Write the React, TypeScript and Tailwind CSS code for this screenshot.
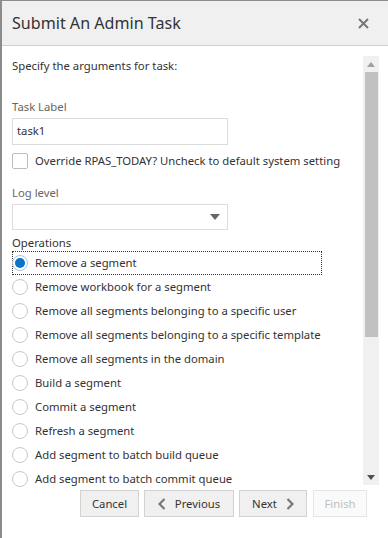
import React from "react";

const ops = [
  "Remove a segment",
  "Remove workbook for a segment",
  "Remove all segments belonging to a specific user",
  "Remove all segments belonging to a specific template",
  "Remove all segments in the domain",
  "Build a segment",
  "Commit a segment",
  "Refresh a segment",
  "Add segment to batch build queue",
  "Add segment to batch commit queue",
  "Remove a segment from batch queue",
];

export default function App() {
  return (
    <div
      className="w-[388px] h-[538px] bg-white border-l-2 border-t border-[#8c8c8c] flex flex-col overflow-hidden text-[#333]"
      style={{ fontFamily: "'Noto Sans', sans-serif" }}
    >
      <div className="h-[45px] shrink-0 bg-[#f0f0f0] border-b border-[#cfcfcf] flex items-center justify-between pl-[10px] pr-[19px]">
        <span className="text-[16.1px] text-[#333]">Submit An Admin Task</span>
        <svg width="11" height="11" viewBox="0 0 11 11">
          <path d="M1 1 L10 10 M10 1 L1 10" stroke="#777" strokeWidth="2" />
        </svg>
      </div>
      <div className="flex pt-[10px] pl-[10px] pr-[10px] h-[442px] shrink-0">
        <div className="flex-1 flex flex-col text-[11.3px] h-[432px] overflow-hidden">
          <div className="shrink-0 h-[20px] leading-[20px]">Specify the arguments for task:</div>
          <div className="shrink-0 mt-[21px] h-[20px] leading-[20px] text-[#666]">Task Label</div>
          <div className="shrink-0 mt-[1px] w-[216px] h-[27px] border border-[#dcdcdc] flex items-center pl-[4px]">task1</div>
          <div className="shrink-0 mt-[8px] flex items-center h-[16px]">
            <div className="w-[16px] h-[16px] border border-[#bdbdbd] rounded-[2px] bg-white" />
            <span className="ml-[7px]">Override RPAS_TODAY? Uncheck to default system setting</span>
          </div>
          <div className="shrink-0 mt-[14px] h-[20px] leading-[20px] text-[#666]">Log level</div>
          <div className="shrink-0 mt-[1px] w-[216px] h-[26px] border border-[#dcdcdc] flex items-center justify-end pr-[7px]">
            <svg width="10" height="6" viewBox="0 0 10 6">
              <path d="M0 0 L10 0 L5 6 Z" fill="#666" />
            </svg>
          </div>
          <div className="shrink-0 mt-[5px] h-[16px] leading-[16px]">Operations</div>
          <div className="shrink-0 flex flex-col">
            {ops.map((o, i) => (
              <div
                key={o}
                className={
                  "shrink-0 flex items-center h-[24px] " +
                  (i === 0 ? "w-[310px] border border-dotted border-[#333]" : "border border-transparent")
                }
              >
                {i === 0 ? (
                  <div className="w-[16px] h-[16px] rounded-full border border-[#9cc8ef] bg-white flex items-center justify-center -ml-px">
                    <div className="w-[10px] h-[10px] rounded-full bg-[#0a72c9]" />
                  </div>
                ) : (
                  <div className="w-[16px] h-[16px] rounded-full border border-[#c8c8c8] bg-white -ml-px" />
                )}
                <span className="ml-[7px]">{o}</span>
              </div>
            ))}
          </div>
        </div>
        <div className="w-[16px] h-[429px] bg-[#f0f0f0] flex flex-col items-center ml-[2px] -mr-[1px]">
          <div className="h-[16px] shrink-0 flex items-center justify-center">
            <svg width="8" height="5" viewBox="0 0 8 5"><path d="M0 5 L8 5 L4 0 Z" fill="#a0a0a0" /></svg>
          </div>
          <div className="w-[13px] h-[265px] shrink-0 bg-[#c1c1c1]" />
          <div className="flex-1" />
          <div className="h-[16px] shrink-0 flex items-center justify-center">
            <svg width="8" height="5" viewBox="0 0 8 5"><path d="M0 0 L8 0 L4 5 Z" fill="#505050" /></svg>
          </div>
        </div>
      </div>
      <div className="flex justify-end pr-[21px] mt-[2px] text-[11.3px] leading-none shrink-0 whitespace-nowrap">
        <button className="h-[27px] w-[59px] bg-[#f0f0f0] border border-[#d2d2d2] text-[#333] flex items-center justify-center">Cancel</button>
        <button className="ml-[5px] h-[27px] w-[90px] bg-[#f0f0f0] border border-[#d2d2d2] text-[#333] flex items-center justify-center gap-[9px]">
          <svg width="8" height="12" viewBox="0 0 8 12"><path d="M6.5 1 L1.5 6 L6.5 11" stroke="#777" strokeWidth="2.2" fill="none" /></svg>
          <span>Previous</span>
        </button>
        <button className="ml-[5px] h-[27px] w-[68px] bg-[#f0f0f0] border border-[#d2d2d2] text-[#333] flex items-center justify-center gap-[9px]">
          <span>Next</span>
          <svg width="8" height="12" viewBox="0 0 8 12"><path d="M1.5 1 L6.5 6 L1.5 11" stroke="#777" strokeWidth="2.2" fill="none" /></svg>
        </button>
        <button className="ml-[6px] h-[27px] w-[54px] bg-[#fafafa] border border-[#e6e6e6] text-[#c0c0c0] flex items-center justify-center">Finish</button>
      </div>
    </div>
  );
}
